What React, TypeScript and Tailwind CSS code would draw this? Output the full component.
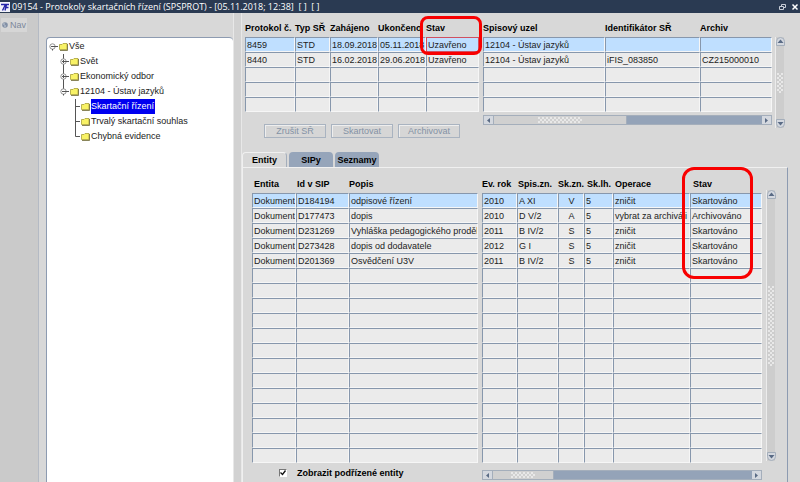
import type { ReactNode } from "react";

type Column = { title: string; width: string; pad?: string; align?: string };

const protocolColumns: Column[] = [
  { title: "Protokol č.", width: "w-[50px]" },
  { title: "Typ SŘ", width: "w-[35px]" },
  { title: "Zahájeno", width: "w-12" },
  { title: "Ukončeno", width: "w-12" },
  { title: "Stav", width: "w-[53px]" },
];
const protocolRows = [
  ["8459", "STD", "18.09.2018", "05.11.2018", "Uzavřeno"],
  ["8440", "STD", "16.02.2018", "29.06.2018", "Uzavřeno"],
];
const nodeColumns: Column[] = [
  { title: "Spisový uzel", width: "" },
  { title: "Identifikátor SŘ", width: "w-[95px]" },
  { title: "Archiv", width: "w-[72px]" },
];
const nodeRows = [
  ["12104 - Ústav jazyků", "", ""],
  ["12104 - Ústav jazyků", "iFIS_083850", "CZ215000010"],
];
const entityColumns: Column[] = [
  { title: "Entita", width: "w-[44px]", pad: "pl-0.5" },
  { title: "Id v SIP", width: "w-[53px]", pad: "pl-px" },
  { title: "Popis", width: "w-[129px]" },
];
const entityRows = [
  ["Dokument", "D184194", "odpisové řízení"],
  ["Dokument", "D177473", "dopis"],
  ["Dokument", "D231269", "Vyhláška pedagogického proděka"],
  ["Dokument", "D273428", "dopis od dodavatele"],
  ["Dokument", "D201369", "Osvědčení U3V"],
];
const detailColumns: Column[] = [
  { title: "Ev. rok", width: "w-[35px]" },
  { title: "Spis.zn.", width: "w-[41px]", pad: "pl-px" },
  { title: "Sk.zn.", width: "w-[26px]", align: "text-center" },
  { title: "Sk.lh.", width: "w-[29px]", pad: "pl-[3px]" },
  { title: "Operace", width: "", pad: "pl-0.5" },
  { title: "Stav", width: "w-[72px]", pad: "pl-[3px]" },
];
const detailRows = [
  ["2010", "A XI", "V", "5", "zničit", "Skartováno"],
  ["2010", "D V/2", "A", "5", "vybrat za archiváli", "Archivováno"],
  ["2011", "B IV/2", "S", "5", "zničit", "Skartováno"],
  ["2012", "G I", "S", "5", "zničit", "Skartováno"],
  ["2011", "B IV/2", "S", "5", "zničit", "Skartováno"],
];

function Grid({ label, columns, rows, count, marked }: { label: string; columns: Column[]; rows: string[][]; count: number; marked?: number }) {
  return (
    <table aria-label={label} className="w-full table-fixed border-separate border-spacing-0">
      <thead>
        <tr>
          {columns.map((c) => (
            <th key={c.title} scope="col" className={`h-[18px] whitespace-nowrap p-0 text-left align-middle font-bold text-black ${c.width} ${c.pad ?? ""}`}>
              {c.title}
            </th>
          ))}
        </tr>
      </thead>
      <tbody>
        {Array.from({ length: count }, (_, r) => (
          <tr key={r}>
            {columns.map((c, i) => (
              <td key={c.title} className="h-[15px] p-0">
                <div
                  className={`h-[15px] overflow-hidden border border-t-[#8797ac] border-r-[#f6f6f6] border-b-[#f6f6f6] border-l-[#8797ac] pl-px leading-[14px] whitespace-nowrap ${c.align ?? ""} ${r === 0 ? "bg-[#bfdfff]" : "bg-[#ebebeb]"} ${r === 0 && i === marked ? "outline outline-[#d05060] -outline-offset-1" : ""}`}
                >
                  {rows[r]?.[i]}
                </div>
              </td>
            ))}
          </tr>
        ))}
      </tbody>
    </table>
  );
}

function Arrow({ points }: { points: string }) {
  return (
    <svg viewBox="0 0 9 9" className="h-[9px] w-[9px] shrink-0" aria-hidden="true">
      <polygon points={points} fill="#5a6b85" />
    </svg>
  );
}

function Grip({ size }: { size: string }) {
  return (
    <span
      className={`bg-[radial-gradient(circle_at_1px_1px,#e8e8e8_1px,transparent_1px),radial-gradient(circle_at_3px_3px,#e8e8e8_1px,transparent_1px)] bg-size-[4px_4px] ${size}`}
    />
  );
}

function HScroll({ thumb, grip }: { thumb: string; grip: string }) {
  return (
    <div className="flex h-[10px] border border-[#a4aebb] bg-[#94a3b8]">
      <button type="button" aria-label="Posunout vlevo" className="flex w-[9px] items-center bg-[#d4d8df]">
        <Arrow points="6,2 6,7 3,4.5" />
      </button>
      <div className={`flex items-center justify-center border-r border-l border-[#a4aebb] bg-[#d0d0d0] ${thumb}`}>
        <Grip size={grip} />
      </div>
      <button type="button" aria-label="Posunout vpravo" className="ml-auto flex w-[9px] items-center bg-[#d4d8df]">
        <Arrow points="3,2 3,7 6,4.5" />
      </button>
    </div>
  );
}

function VScroll({ grip }: { grip: string }) {
  return (
    <div className="flex w-[9px] flex-1 flex-col items-center justify-between border-l border-[#ececec] bg-[#cdcdcd]">
      <button type="button" aria-label="Posunout nahoru" className="flex h-[9px] w-[9px] items-center justify-center rounded-t-md border border-[#a4aebb] bg-[#d4d8df]">
        <Arrow points="1.5,6 7.5,6 4.5,2.5" />
      </button>
      <Grip size={grip} />
      <button type="button" aria-label="Posunout dolů" className="flex h-[9px] w-[9px] items-center justify-center rounded-b-md border border-[#a4aebb] bg-[#d4d8df]">
        <Arrow points="1.5,3 7.5,3 4.5,6.5" />
      </button>
    </div>
  );
}

function Folder() {
  return (
    <svg viewBox="0 0 9 8" className="h-2 w-[9px] shrink-0" aria-hidden="true">
      <path d="M.5 1.5h2.5l1-1h4v6h-7.5z" fill="#f8f266" stroke="#a89f3a" strokeWidth=".8" />
      <path d="M8.5 1v6.5H1" fill="none" stroke="#6b6630" strokeWidth=".8" />
    </svg>
  );
}

function Branch({ kind }: { kind: "root" | "plus" | "minus" | "leaf" | "last" }) {
  return (
    <svg viewBox="0 0 10 15" className="h-[15px] w-[10px] shrink-0" fill="none" stroke="#555" aria-hidden="true">
      {kind === "plus" && <path d="M3.5 0v15" />}
      {kind === "minus" && <path d="M3.5 0v5" />}
      {kind === "leaf" && <path d="M4.5 0v15M4.5 7.5H9" />}
      {kind === "last" && <path d="M4.5 0v7.5H9" />}
      {(kind === "root" || kind === "minus" || kind === "plus") && (
        <>
          <circle cx="3.5" cy="7.5" r="2.7" fill="#fff" stroke="#777" strokeWidth=".8" />
          <path d="M2 7.5h7" />
        </>
      )}
      {kind === "plus" && <path d="M3.5 6v3" />}
      {(kind === "root" || kind === "minus") && <path d="M3.5 10v1.5" />}
    </svg>
  );
}

function TreeRow({ kind, indent, selected, children }: { kind: "root" | "plus" | "minus" | "leaf" | "last"; indent: string; selected?: boolean; children: ReactNode }) {
  return (
    <li className={`flex h-[15px] items-center ${indent}`}>
      <Branch kind={kind} />
      <Folder />
      <span className={`ml-px h-[15px] pr-px leading-[15px] whitespace-nowrap ${selected ? "bg-[#0000f0] text-white" : ""}`}>{children}</span>
    </li>
  );
}

function Action({ children }: { children: ReactNode }) {
  return (
    <button type="button" className="h-[14px] w-[62px] border border-[#a9b3c0] bg-[#d6d6d6] text-center leading-3 text-[#8492a5] shadow-[inset_1px_1px_0_#eeeeee]">
      {children}
    </button>
  );
}

export default function App() {
  return (
    <div className="flex h-screen flex-col overflow-hidden bg-[#d8d8d8] font-['Liberation_Sans',Arial,sans-serif] text-[9px] leading-3 text-[#222]">
      <header className="flex h-[13px] shrink-0 items-center bg-[#2a3a52] pr-px text-white">
        <svg viewBox="0 0 10 10" className="mr-0.5 h-[10px] w-[10px]" aria-hidden="true">
          <path d="M0 0h10v10H0z" fill="#f2f2fa" />
          <path d="M1 2.5h4.5L2.5 8.5M5 8.5l1.5-6H9M5.5 5.5h3" fill="none" stroke="#2424a8" strokeWidth="1.4" />
        </svg>
        <h1 className="font-['Open_Sans',Arial,sans-serif] text-[9px] whitespace-pre">09154 - Protokoly skartačních řízení (SPSPROT) - [05.11.2018; 12:38]  [ ]  [ ]</h1>
        <button type="button" aria-label="Obnovit okno" className="ml-auto">
          <svg viewBox="0 0 8 8" className="h-2 w-2" fill="none" stroke="#c8ced8">
            <path d="M2.5 3V1.5h4v3H5M.5 3.5h4v3h-4z" />
          </svg>
        </button>
        <button type="button" aria-label="Zavřít okno" className="ml-1">
          <svg viewBox="0 0 8 8" className="h-2 w-2" stroke="#fff" strokeWidth="1.5">
            <path d="M1.5 1.5l5 5M6.5 1.5l-5 5" />
          </svg>
        </button>
      </header>

      <div className="flex min-h-0 flex-1">
        <nav className="w-[39px] shrink-0 border-r border-[#b4bac4] bg-[#cacaca] pt-[5px] pl-px">
          <button type="button" className="flex h-[14px] items-center gap-[2px] bg-[#d6d6d6] px-px text-[#7c889b]">
            <svg viewBox="0 0 6 6" className="h-[6px] w-[6px]" aria-hidden="true">
              <circle cx="3" cy="3" r="2.8" fill="#8290a6" />
              <path d="M1 2h2M2 4h2" stroke="#c5ccd7" />
            </svg>
            Nav
          </button>
        </nav>

        <aside className="mt-6 ml-[7px] w-[187px] shrink-0 rounded-t-sm border-t border-l border-[#8d9bb1] bg-white pt-px pl-[2px]">
          <ul>
            <TreeRow kind="root" indent="pl-0">Vše</TreeRow>
            <TreeRow kind="plus" indent="pl-[11px]">Svět</TreeRow>
            <TreeRow kind="plus" indent="pl-[11px]">Ekonomický odbor</TreeRow>
            <TreeRow kind="minus" indent="pl-[11px]">12104 - Ústav jazyků</TreeRow>
            <TreeRow kind="leaf" indent="pl-[22px]" selected>Skartační řízení</TreeRow>
            <TreeRow kind="leaf" indent="pl-[22px]">Trvalý skartační souhlas</TreeRow>
            <TreeRow kind="last" indent="pl-[22px]">Chybná evidence</TreeRow>
          </ul>
        </aside>
        <div className="w-[9px] shrink-0 border-r border-l border-[#e8e8e8] bg-[#d2d2d2]" />

        <main className="flex min-w-0 flex-1 flex-col">
          <section className="flex pt-[6px] pr-4 pl-[3px]">
            <div className="w-[234px] shrink-0">
              <div className="relative">
                <Grid label="Protokoly" columns={protocolColumns} rows={protocolRows} count={5} marked={4} />
                <div className="pointer-events-none absolute -top-[3px] -right-[3px] h-[39px] w-[62px] rounded-lg border-[3px] border-[#f80000]" />
              </div>
              <div className="mt-[12px] ml-[19px] flex gap-[5px]">
                <Action>Zrušit SŘ</Action>
                <Action>Skartovat</Action>
                <Action>Archivovat</Action>
              </div>
            </div>
            <div className="ml-1 min-w-0 flex-1">
              <Grid label="Spisové uzly" columns={nodeColumns} rows={nodeRows} count={5} />
              <div className="mt-[3px]">
                <HScroll thumb="w-[134px]" grip="h-[6px] w-11" />
              </div>
            </div>
            <div className="ml-[3px] flex h-[109px] pt-[18px]">
              <VScroll grip="h-5 w-[6px]" />
            </div>
          </section>

          <div role="tablist" className="mt-[14px] flex h-[15px] shrink-0 items-end gap-0.5 font-bold text-black">
            <button type="button" role="tab" aria-selected="true" className="h-[15px] w-[45px] rounded-t-sm border-t border-r border-l border-[#f0f0f0] border-r-[#a4aebb]">Entity</button>
            <button type="button" role="tab" aria-selected="false" className="h-[15px] w-11 rounded-t-sm bg-[#96a5ba]">SIPy</button>
            <button type="button" role="tab" aria-selected="false" className="h-[15px] w-11 rounded-t-sm bg-[#96a5ba]">Seznamy</button>
          </div>

          <section className="mr-3 flex flex-1 border-t border-r border-l border-[#f0f0f0] border-r-[#8d9bb1] pt-[7px] pr-3 pl-[9px]">
            <div className="w-[226px] shrink-0">
              <Grid label="Entity" columns={entityColumns} rows={entityRows} count={18} />
              <label className="mt-1 ml-[27px] flex items-center gap-[10px] font-bold text-black">
                <span className="relative flex h-2 w-2">
                  <input type="checkbox" defaultChecked className="h-2 w-2 appearance-none border border-[#777] border-r-white border-b-white bg-white" />
                  <svg viewBox="0 0 8 8" className="pointer-events-none absolute inset-0" fill="none" stroke="#111" strokeWidth="1.3">
                    <path d="M1.5 3.5l2 2 3-4" />
                  </svg>
                </span>
                Zobrazit podřízené entity
              </label>
            </div>
            <div className="ml-1 min-w-0 flex-1">
              <div className="relative">
                <Grid label="Podrobnosti entit" columns={detailColumns} rows={detailRows} count={18} />
                <div className="pointer-events-none absolute -top-2 right-[9px] h-[112px] w-[71px] rounded-xl border-[3px] border-[#f80000]" />
              </div>
              <div className="mt-[7px]">
                <HScroll thumb="w-[62px]" grip="h-[6px] w-6" />
              </div>
            </div>
            <div className="ml-1 flex h-[286px] pt-[15px]">
              <VScroll grip="h-20 w-[6px]" />
            </div>
          </section>
        </main>
      </div>
    </div>
  );
}
